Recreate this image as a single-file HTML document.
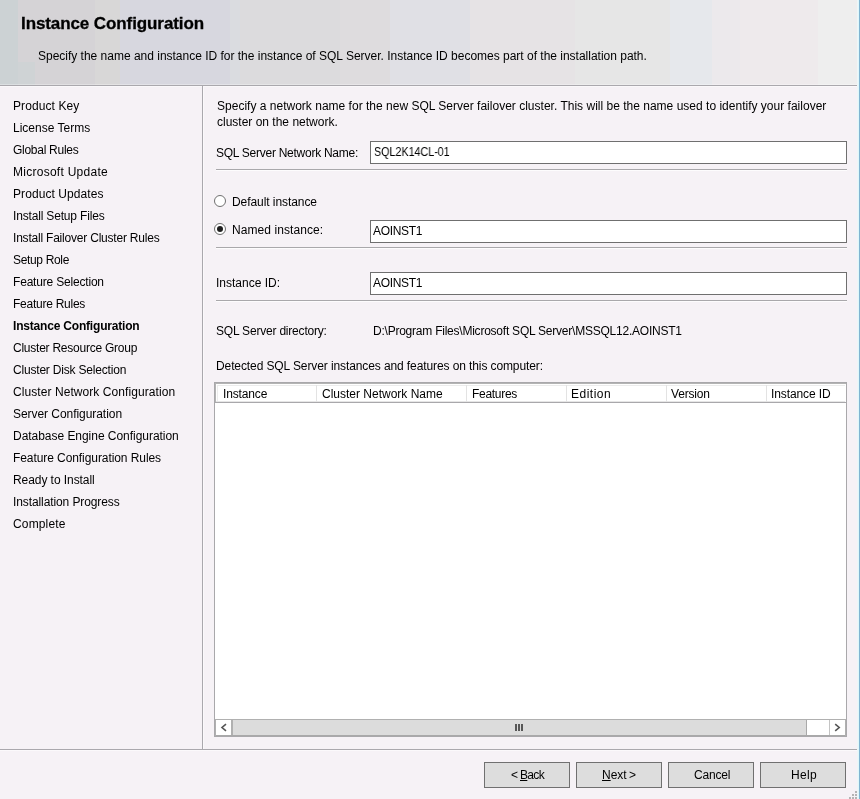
<!DOCTYPE html>
<html><head><meta charset="utf-8"><style>
html,body{margin:0;padding:0;}
body{width:860px;height:799px;position:relative;overflow:hidden;background:#f6f2f6;font-family:"Liberation Sans",sans-serif;color:#000;}
.t{position:absolute;white-space:nowrap;line-height:20px;transform-origin:0 0;will-change:transform;font-family:"Liberation Sans",sans-serif;}
.a{position:absolute;}
.tb{position:absolute;left:370px;width:475px;height:21px;background:#fff;border:1px solid #6f6f6f;}
.sep{position:absolute;left:216px;width:631px;height:1px;background:#a9a8ab;}
.btn{position:absolute;top:762px;width:84px;height:24px;background:#dddddd;border:1px solid #707070;}
.csep{position:absolute;top:385px;width:1px;height:17px;background:#e3e3e3;}
.g{position:absolute;width:2px;height:2px;background:#b4b4b4;}
</style></head><body>
<div class="a" style="left:0;top:0;width:860px;height:85px;overflow:hidden">
<div style="position:absolute;left:0px;top:0;width:18px;height:85px;background:#ccd2d4"></div>
<div style="position:absolute;left:18px;top:0;width:77px;height:85px;background:#d5d3d6"></div>
<div style="position:absolute;left:95px;top:0;width:25px;height:85px;background:#d8d7d7"></div>
<div style="position:absolute;left:120px;top:0;width:110px;height:85px;background:#d7d7df"></div>
<div style="position:absolute;left:230px;top:0;width:10px;height:85px;background:#dadce0"></div>
<div style="position:absolute;left:240px;top:0;width:100px;height:85px;background:#dcdbdd"></div>
<div style="position:absolute;left:340px;top:0;width:50px;height:85px;background:#dedcde"></div>
<div style="position:absolute;left:390px;top:0;width:80px;height:85px;background:#e0e0e5"></div>
<div style="position:absolute;left:470px;top:0;width:105px;height:85px;background:#e6e3e5"></div>
<div style="position:absolute;left:575px;top:0;width:95px;height:85px;background:#e6e6e6"></div>
<div style="position:absolute;left:670px;top:0;width:42px;height:85px;background:#e6e8ec"></div>
<div style="position:absolute;left:712px;top:0;width:28px;height:85px;background:#ece9ec"></div>
<div style="position:absolute;left:740px;top:0;width:78px;height:85px;background:#eeeaec"></div>
<div style="position:absolute;left:818px;top:0;width:40px;height:85px;background:#eeeeee"></div>
<div style="position:absolute;left:18px;top:62px;width:17px;height:23px;background:#cfd3d5"></div>
</div>
<div class="a" style="left:0;top:84px;width:858px;height:1px;background:rgba(255,255,255,0.3)"></div>
<div class="a" style="left:0;top:85px;width:858px;height:1px;background:#aaa8ad"></div>
<div class="a" style="left:0;top:86px;width:858px;height:1px;background:#faf8fa"></div>
<div class="a" style="left:202px;top:86px;width:1px;height:663px;background:#aaa8ad"></div>
<div class="a" style="left:203px;top:87px;width:1px;height:662px;background:#fbf9fb"></div>
<div class="a" style="left:0;top:749px;width:858px;height:1px;background:#aaa8ad"></div>
<div class="a" style="left:0;top:750px;width:858px;height:1px;background:#fbf9fb"></div>

<div class="tb" style="top:141px"></div>
<div class="sep" style="top:169px"></div>
<div class="sep" style="top:170px;background:#fdfcfd"></div>
<div class="tb" style="top:220px"></div>
<div class="sep" style="top:247px"></div>
<div class="sep" style="top:248px;background:#fdfcfd"></div>
<div class="tb" style="top:272px"></div>
<div class="sep" style="top:300px"></div>
<div class="sep" style="top:301px;background:#fdfcfd"></div>

<div class="a" style="left:214px;top:195px;width:10px;height:10px;border:1px solid #707070;border-radius:50%;background:#fff"></div>
<div class="a" style="left:214px;top:223px;width:10px;height:10px;border:1px solid #707070;border-radius:50%;background:#fff"></div>
<div class="a" style="left:217px;top:226px;width:6px;height:6px;border-radius:50%;background:#1e1e1e"></div>

<div class="a" style="left:214px;top:382px;width:631px;height:353px;border:1px solid #a9a8ab;background:#fff"></div>
<div class="a" style="left:215px;top:383px;width:631px;height:1px;background:#b4b4b4"></div>
<div class="a" style="left:215px;top:383px;width:1px;height:20px;background:#b4b4b4"></div>
<div class="a" style="left:217px;top:385px;width:628px;height:1px;background:#ececec"></div>
<div class="a" style="left:217px;top:385px;width:1px;height:16px;background:#ececec"></div>
<div class="a" style="left:216px;top:401px;width:629px;height:1px;background:#e6e6e6"></div>
<div class="a" style="left:215px;top:402px;width:631px;height:1px;background:#a9a8ab"></div>
<div class="csep" style="left:316px"></div>
<div class="csep" style="left:466px"></div>
<div class="csep" style="left:566px"></div>
<div class="csep" style="left:666px"></div>
<div class="csep" style="left:766px"></div>

<div class="a" style="left:215px;top:719px;width:631px;height:1px;background:#b0b0b0"></div>
<div class="a" style="left:215px;top:735px;width:631px;height:1px;background:#a9a9a9"></div>
<div class="a" style="left:215px;top:719px;width:1px;height:17px;background:#b0b0b0"></div>
<div class="a" style="left:845px;top:719px;width:1px;height:17px;background:#b0b0b0"></div>
<div class="a" style="left:231px;top:720px;width:2px;height:15px;background:#b0b0b0"></div>
<div class="a" style="left:233px;top:720px;width:573px;height:15px;background:#dcdcdc"></div>
<div class="a" style="left:806px;top:720px;width:1px;height:15px;background:#a9a9a9"></div>
<div class="a" style="left:829px;top:720px;width:1px;height:15px;background:#c4c4c4"></div>
<div class="a" style="left:515px;top:724px;width:2px;height:7px;background:#575757"></div>
<div class="a" style="left:518px;top:724px;width:2px;height:7px;background:#575757"></div>
<div class="a" style="left:521px;top:724px;width:2px;height:7px;background:#575757"></div>
<svg class="a" style="left:215px;top:720px" width="16" height="15"><path d="M11 4.2 L7 7.5 L11 10.8" fill="none" stroke="#555" stroke-width="1.6"/></svg>
<svg class="a" style="left:830px;top:720px" width="16" height="15"><path d="M5.2 4.2 L9.2 7.5 L5.2 10.8" fill="none" stroke="#555" stroke-width="1.6"/></svg>

<div class="btn" style="left:484px"></div>
<div class="btn" style="left:576px"></div>
<div class="btn" style="left:668px"></div>
<div class="btn" style="left:760px"></div>

<div class="g" style="left:855px;top:791px"></div>
<div class="g" style="left:852px;top:794px"></div>
<div class="g" style="left:855px;top:794px"></div>
<div class="g" style="left:849px;top:797px"></div>
<div class="g" style="left:852px;top:797px"></div>
<div class="g" style="left:855px;top:797px"></div>

<div class="a" style="left:857px;top:0;width:1px;height:799px;background:#eef6f8"></div>
<div class="a" style="left:858px;top:0;width:1px;height:799px;background:#dff7fb"></div>
<div class="a" style="left:859px;top:0;width:1px;height:799px;background:#80b4d0"></div>

<div class="t" style="left:21.25px;top:14px;font-size:17px;font-weight:bold;letter-spacing:-0.095px;-webkit-text-stroke:0.3px #000">Instance Configuration</div>
<div class="t" style="left:37.5px;top:46px;font-size:12px;font-weight:normal;letter-spacing:-0.009px">Specify the name and instance ID for the instance of SQL Server. Instance ID becomes part of the installation path.</div>
<div class="t" style="left:12.5px;top:96px;font-size:12px;font-weight:normal;letter-spacing:0.1px">Product Key</div>
<div class="t" style="left:12.5px;top:118px;font-size:12px;font-weight:normal">License Terms</div>
<div class="t" style="left:12.5px;top:140px;font-size:12px;font-weight:normal;letter-spacing:-0.273px">Global Rules</div>
<div class="t" style="left:12.5px;top:162px;font-size:12px;font-weight:normal;letter-spacing:0.267px">Microsoft Update</div>
<div class="t" style="left:12.5px;top:184px;font-size:12px;font-weight:normal;letter-spacing:0.071px">Product Updates</div>
<div class="t" style="left:12.5px;top:206px;font-size:12px;font-weight:normal;letter-spacing:-0.167px">Install Setup Files</div>
<div class="t" style="left:12.5px;top:228px;font-size:12px;font-weight:normal;letter-spacing:-0.207px">Install Failover Cluster Rules</div>
<div class="t" style="left:12.5px;top:250px;font-size:12px;font-weight:normal;letter-spacing:-0.333px">Setup Role</div>
<div class="t" style="left:12.5px;top:272px;font-size:12px;font-weight:normal;letter-spacing:-0.188px">Feature Selection</div>
<div class="t" style="left:12.5px;top:294px;font-size:12px;font-weight:normal;letter-spacing:-0.25px">Feature Rules</div>
<div class="t" style="left:12.5px;top:316px;font-size:12px;font-weight:bold;letter-spacing:-0.19px">Instance Configuration</div>
<div class="t" style="left:12.5px;top:338px;font-size:12px;font-weight:normal;letter-spacing:-0.238px">Cluster Resource Group</div>
<div class="t" style="left:12.5px;top:360px;font-size:12px;font-weight:normal;letter-spacing:-0.19px">Cluster Disk Selection</div>
<div class="t" style="left:12.5px;top:382px;font-size:12px;font-weight:normal;letter-spacing:0.071px">Cluster Network Configuration</div>
<div class="t" style="left:12.5px;top:404px;font-size:12px;font-weight:normal;letter-spacing:-0.053px">Server Configuration</div>
<div class="t" style="left:12.5px;top:426px;font-size:12px;font-weight:normal;letter-spacing:-0.036px">Database Engine Configuration</div>
<div class="t" style="left:12.5px;top:448px;font-size:12px;font-weight:normal;letter-spacing:-0.077px">Feature Configuration Rules</div>
<div class="t" style="left:12.5px;top:470px;font-size:12px;font-weight:normal;letter-spacing:-0.067px">Ready to Install</div>
<div class="t" style="left:12.5px;top:492px;font-size:12px;font-weight:normal;letter-spacing:-0.1px">Installation Progress</div>
<div class="t" style="left:12.5px;top:514px;font-size:12px;font-weight:normal;letter-spacing:0.143px">Complete</div>
<div class="t" style="left:216.5px;top:96px;font-size:12px;font-weight:normal;letter-spacing:0.009px">Specify a network name for the new SQL Server failover cluster. This will be the name used to identify your failover</div>
<div class="t" style="left:216.5px;top:112px;font-size:12px;font-weight:normal">cluster on the network.</div>
<div class="t" style="left:215.5px;top:143px;font-size:12px;font-weight:normal;letter-spacing:-0.261px">SQL Server Network Name:</div>
<div class="t" style="left:373.5px;top:142px;font-size:12px;font-weight:normal;transform:scaleX(0.893)">SQL2K14CL-01</div>
<div class="t" style="left:231.5px;top:192px;font-size:12px;font-weight:normal;letter-spacing:-0.067px">Default instance</div>
<div class="t" style="left:231.5px;top:220px;font-size:12px;font-weight:normal;letter-spacing:0.071px">Named instance:</div>
<div class="t" style="left:372.5px;top:221px;font-size:12px;font-weight:normal;letter-spacing:-0.333px">AOINST1</div>
<div class="t" style="left:215.5px;top:273px;font-size:12px;font-weight:normal">Instance ID:</div>
<div class="t" style="left:372.5px;top:273px;font-size:12px;font-weight:normal;letter-spacing:-0.333px">AOINST1</div>
<div class="t" style="left:215.5px;top:321px;font-size:12px;font-weight:normal;letter-spacing:-0.2px">SQL Server directory:</div>
<div class="t" style="left:372.5px;top:321px;font-size:12px;font-weight:normal;letter-spacing:-0.231px">D:\Program Files\Microsoft SQL Server\MSSQL12.AOINST1</div>
<div class="t" style="left:215.5px;top:356px;font-size:12px;font-weight:normal;letter-spacing:-0.102px">Detected SQL Server instances and features on this computer:</div>
<div class="t" style="left:222.5px;top:384px;font-size:12px;font-weight:normal;letter-spacing:-0.143px">Instance</div>
<div class="t" style="left:321.5px;top:384px;font-size:12px;font-weight:normal">Cluster Network Name</div>
<div class="t" style="left:471.5px;top:384px;font-size:12px;font-weight:normal;letter-spacing:-0.286px">Features</div>
<div class="t" style="left:570.5px;top:384px;font-size:12px;font-weight:normal;letter-spacing:0.5px">Edition</div>
<div class="t" style="left:670.5px;top:384px;font-size:12px;font-weight:normal;letter-spacing:-0.167px">Version</div>
<div class="t" style="left:770.5px;top:384px;font-size:12px;font-weight:normal;letter-spacing:-0.1px">Instance ID</div>
<div class="t" style="left:510.5px;top:765px;font-size:12px;font-weight:normal">&lt;</div>
<div class="t" style="left:519.5px;top:765px;font-size:12px;font-weight:normal;letter-spacing:-0.667px"><u>B</u>ack</div>
<div class="t" style="left:601.5px;top:765px;font-size:12px;font-weight:normal"><u>N</u>ext</div>
<div class="t" style="left:629.0px;top:765px;font-size:12px;font-weight:normal">&gt;</div>
<div class="t" style="left:693.5px;top:765px;font-size:12px;font-weight:normal;letter-spacing:-0.2px">Cancel</div>
<div class="t" style="left:790.5px;top:765px;font-size:12px;font-weight:normal;letter-spacing:0.333px">Help</div>
</body></html>
